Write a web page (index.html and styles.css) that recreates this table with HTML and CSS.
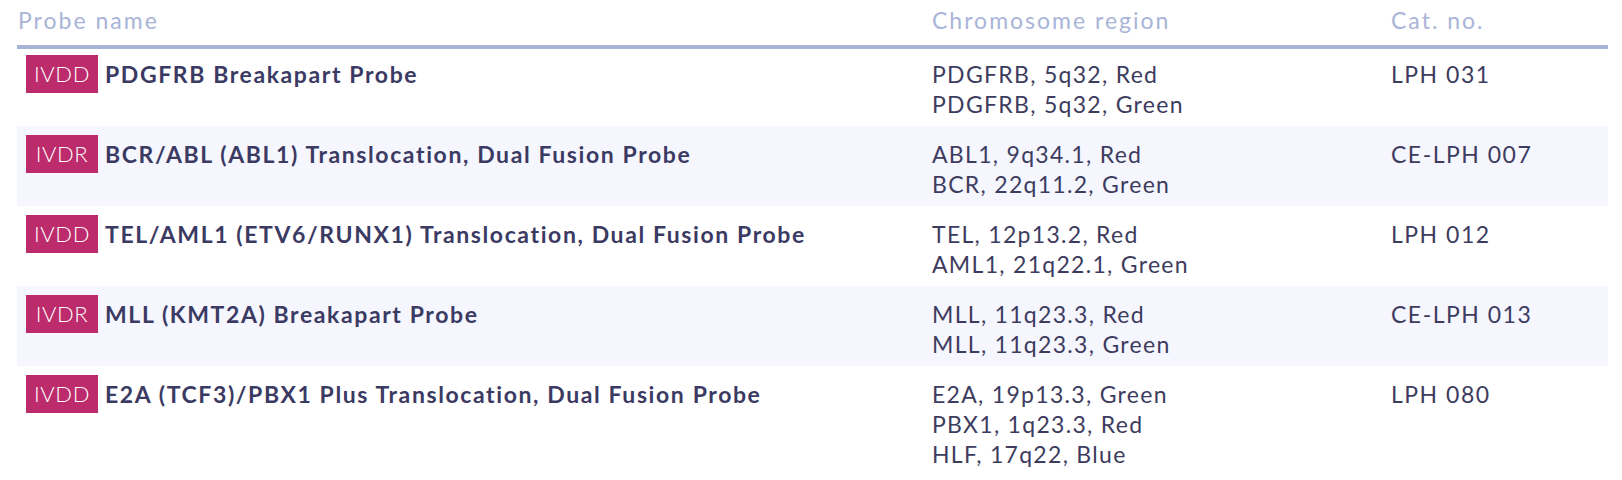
FILE: index.html
```html
<!DOCTYPE html>
<html lang="en">
<head>
<meta charset="utf-8">
<title>Probes</title>
<link rel="stylesheet" href="styles.css">
</head>
<body>
<div class="table">
  <div class="thead">
    <div class="th th-name">Probe name</div>
    <div class="th">Chromosome region</div>
    <div class="th">Cat. no.</div>
  </div>
  <div class="row">
    <div class="cell name"><span class="badge">IVDD</span><span class="title">PDGFRB Breakapart Probe</span></div>
    <div class="cell region">PDGFRB, 5q32, Red<br>PDGFRB, 5q32, Green</div>
    <div class="cell cat">LPH 031</div>
  </div>
  <div class="row alt">
    <div class="cell name"><span class="badge">IVDR</span><span class="title">BCR/ABL (ABL1) Translocation, Dual Fusion Probe</span></div>
    <div class="cell region">ABL1, 9q34.1, Red<br>BCR, 22q11.2, Green</div>
    <div class="cell cat">CE-LPH 007</div>
  </div>
  <div class="row">
    <div class="cell name"><span class="badge">IVDD</span><span class="title">TEL/AML1 (ETV6/RUNX1) Translocation, Dual Fusion Probe</span></div>
    <div class="cell region">TEL, 12p13.2, Red<br>AML1, 21q22.1, Green</div>
    <div class="cell cat">LPH 012</div>
  </div>
  <div class="row alt">
    <div class="cell name"><span class="badge">IVDR</span><span class="title">MLL (KMT2A) Breakapart Probe</span></div>
    <div class="cell region">MLL, 11q23.3, Red<br>MLL, 11q23.3, Green</div>
    <div class="cell cat">CE-LPH 013</div>
  </div>
  <div class="row">
    <div class="cell name"><span class="badge">IVDD</span><span class="title">E2A (TCF3)/PBX1 Plus Translocation, Dual Fusion Probe</span></div>
    <div class="cell region">E2A, 19p13.3, Green<br>PBX1, 1q23.3, Red<br>HLF, 17q22, Blue</div>
    <div class="cell cat">LPH 080</div>
  </div>
</div>
</body>
</html>
```
FILE: styles.css
```css
html, body {
  margin: 0;
  padding: 0;
  background: #ffffff;
}
body {
  font-family: "Lato", "Liberation Sans", sans-serif;
  color: #3d3c5e;
}
.table {
  margin-left: 17px;
  width: 1591px;
}
.thead,
.row {
  display: grid;
  grid-template-columns: 899px 459px 1fr;
}
.thead {
  height: 45px;
  border-bottom: 4px solid #a9b5d7;
  margin-bottom: -3px;
}
.th {
  padding: 5px 16px 0;
  font-size: 23px;
  line-height: 30px;
  color: #a9b4d8;
  letter-spacing: 2px;
}
.th.th-name {
  padding-left: 1px;
}
.row {
  min-height: 80px;
  box-sizing: border-box;
}
.row.alt {
  background: #f5f6fe;
}
.cell {
  padding: 13px 16px 0;
  font-size: 23px;
  line-height: 30px;
  letter-spacing: 1.3px;
}
.cat {
  letter-spacing: 1.5px;
}
.cell.name {
  padding: 9px 9px 0;
  display: flex;
  align-items: flex-start;
  gap: 7px;
}
.badge {
  flex: 0 0 72px;
  width: 72px;
  box-sizing: border-box;
  text-align: center;
  background: #bc2b6b;
  color: #ffffff;
  height: 38px;
  line-height: 38px;
  font-size: 22px;
  font-weight: 300;
  letter-spacing: 0.6px;
}
.title {
  line-height: 38px;
  font-size: 23px;
  font-weight: 700;
  color: #3b3a63;
  letter-spacing: 1.6px;
}
.row:last-child {
  padding-bottom: 12px;
}
```
